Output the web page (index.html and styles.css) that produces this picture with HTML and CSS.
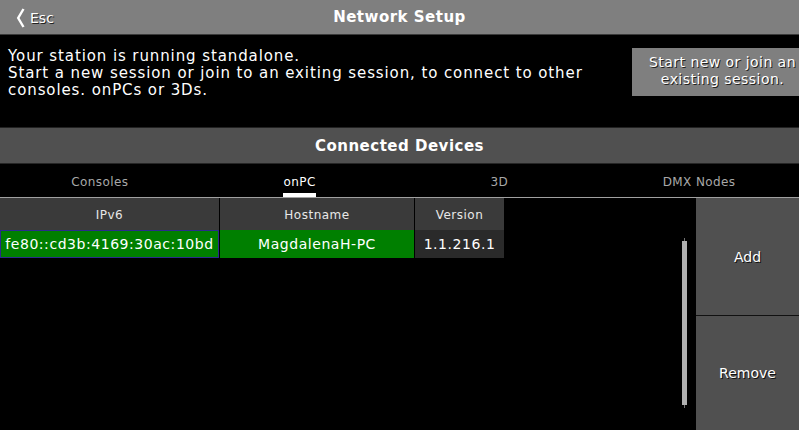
FILE: index.html
```html
<!DOCTYPE html>
<html>
<head>
<meta charset="utf-8">
<link rel="stylesheet" href="styles.css">
</head>
<body>
<div class="app">
  <header class="titlebar">
    <div class="esc">
      <svg class="chev" width="9" height="20" viewBox="0 0 9 20"><path d="M7.5 1 L2.2 10 L7.5 19" fill="none" stroke="#fff" stroke-width="2.4"/></svg>
      <span>Esc</span>
    </div>
    <div class="title">Network Setup</div>
  </header>
  <section class="info">
    <p class="msg">Your station is running standalone.<br>Start a new session or join to an exiting session, to connect to other<br>consoles. onPCs or 3Ds.</p>
    <div class="startbtn">Start new or join an<br>existing session.</div>
  </section>
  <div class="sectionbar">Connected Devices</div>
  <nav class="tabs">
    <div class="tab">Consoles</div>
    <div class="tab active">onPC</div>
    <div class="tab">3D</div>
    <div class="tab">DMX Nodes</div>
  </nav>
  <main class="content">
    <div class="tablearea">
      <div class="grid">
        <div class="th c1">IPv6</div>
        <div class="th c2">Hostname</div>
        <div class="th c3">Version</div>
        <div class="td c1 green sel">fe80::cd3b:4169:30ac:10bd</div>
        <div class="td c2 green">MagdalenaH-PC</div>
        <div class="td c3 ver">1.1.216.1</div>
      </div>
      <div class="scroll"><div class="tick"></div><div class="thumb"></div><div class="tick"></div></div>
    </div>
    <div class="actions">
      <div class="action">Add</div>
      <div class="action">Remove</div>
    </div>
  </main>
</div>
</body>
</html>
```
FILE: styles.css
```css
* { box-sizing: border-box; }
html, body { margin: 0; padding: 0; background: #000; }
body { width: 799px; height: 430px; overflow: hidden; font-family: "DejaVu Sans", "Liberation Sans", sans-serif; color: #fff; }
.app { display: flex; flex-direction: column; height: 430px; }

.titlebar { height: 35px; background: #7f7f7f; border-bottom: 1px solid #3a3a3a; position: relative; display: flex; align-items: center; justify-content: center; }
.esc { position: absolute; left: 16px; top: 8px; display: flex; align-items: center; gap: 5px; font-size: 14px; text-shadow: 1px 1px 0 #222; }
.chev { display: block; }
.title { font-weight: bold; font-size: 15px; letter-spacing: 0.5px; }

.info { height: 93px; display: flex; justify-content: space-between; align-items: flex-start; border-bottom: 1px solid #222; }
.msg { margin: 0; padding: 13px 0 0 8px; font-size: 15px; line-height: 17px; letter-spacing: 0.9px; }
.startbtn { margin-top: 13px; width: 167px; height: 48px; background: #7f7f7f; text-align: center; font-size: 14px; line-height: 17px; padding-top: 6px; padding-left: 14px; letter-spacing: 0.45px; white-space: nowrap; text-shadow: 1px 1px 0 #222; }

.sectionbar { height: 36px; background: #505050; border-bottom: 1px solid #262626; display: flex; align-items: center; justify-content: center; font-weight: bold; font-size: 15px; letter-spacing: 0.5px; }

.tabs { height: 34px; display: flex; border-bottom: 1px solid #a0a0a0; }
.tab { flex: 1; display: flex; align-items: center; justify-content: center; padding-top: 3px; font-size: 12px; color: #a8a8a8; letter-spacing: 0.4px; position: relative; }
.tab.active { color: #fff; }
.tab.active::after { content: ""; position: absolute; left: 50%; bottom: 0; width: 33px; margin-left: -17px; height: 4px; background: #fff; }

.content { flex: 1; display: flex; }
.tablearea { flex: 1; position: relative; }
.grid { display: grid; grid-template-columns: 219px 194px 89px; column-gap: 1px; grid-template-rows: 32px 28px; width: 504px; }
.th { background: #3a3a3a; display: flex; align-items: center; justify-content: center; padding-top: 1px; font-size: 12px; color: #e8e8e8; letter-spacing: 0.5px; }
.td { display: flex; align-items: center; justify-content: center; font-size: 14px; letter-spacing: 0.55px; }
.green { background: #007f00; }
.sel { border: 1px solid #2b2b8c; }
.ver { background: #2a2a2a; }

.scroll { position: absolute; left: 682px; top: 40px; width: 5px; display: flex; flex-direction: column; align-items: center; }
.tick { width: 1px; height: 3px; background: #707070; }
.thumb { width: 5px; height: 164px; background: #b0b0b0; }

.actions { width: 103px; display: flex; flex-direction: column; background: #505050; }
.action { flex: 1; display: flex; align-items: center; justify-content: center; font-size: 14px; text-shadow: 1px 1px 0 #111; }
.action + .action { border-top: 1px solid #111; }
.action:first-child { flex: 0 0 117px; }
```
